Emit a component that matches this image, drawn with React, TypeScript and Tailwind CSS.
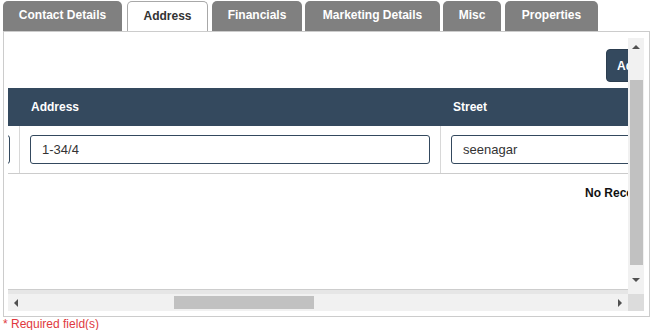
import React from "react"

const tabs = [
  { label: "Contact Details", cls: "w-[119px] ml-[3px]" },
  { label: "Address", cls: "w-[81px] ml-[5px]", active: true },
  { label: "Financials", cls: "w-[90px] ml-[4px]" },
  { label: "Marketing Details", cls: "w-[135px] ml-[3px]" },
  { label: "Misc", cls: "w-[58px] ml-[3px]" },
  { label: "Properties", cls: "w-[93px] ml-[4px]" },
]

const Arrow = ({ dir }: { dir: "up" | "down" | "left" | "right" }) => {
  const pts = {
    up: "0,4 4,0 8,4",
    down: "0,0 8,0 4,4",
    left: "4,0 4,8 0,4",
    right: "0,0 0,8 4,4",
  }[dir]
  const vertical = dir === "up" || dir === "down"
  return (
    <svg width={vertical ? 8 : 4} height={vertical ? 4 : 8} viewBox={vertical ? "0 0 8 4" : "0 0 4 8"}>
      <polygon points={pts} fill="#505050" />
    </svg>
  )
}

export default function App() {
  return (
    <div className="w-[656px] h-[330px] bg-white overflow-hidden font-['Liberation_Sans',Arial,sans-serif]">
      {/* tab strip */}
      <div className="flex items-end h-[31px]">
        {tabs.map((t) =>
          t.active ? (
            <div
              key={t.label}
              className={`${t.cls} h-[30px] flex items-center justify-center bg-white border border-b-0 border-[#a8a8a8] rounded-t-[5px] text-[12px] font-bold text-[#333] pb-[2px]`}
            >
              {t.label}
            </div>
          ) : (
            <div
              key={t.label}
              className={`${t.cls} h-[30px] flex items-center justify-center bg-[#808080] rounded-t-[5px] text-[12px] font-bold text-white pb-[2px]`}
            >
              {t.label}
            </div>
          )
        )}
      </div>

      {/* panel */}
      <div className="ml-[3px] w-[647px] h-[286px] border border-[#cccccc] pt-[6px] pl-[4px]">
        <div className="grid grid-cols-[620px_16px] grid-rows-[256px_17px]">
          {/* scroll content */}
          <div className="overflow-hidden flex flex-col">
            <div className="flex h-[50px] pt-[11px]">
              <div className="ml-[598px] shrink-0 w-[40px] h-[33px] bg-[#34495e] border border-[#2c3e50] rounded-[4px] text-white text-[12px] font-bold flex items-center pl-[10px]">
                Add
              </div>
            </div>
            <div className="flex h-[38px] bg-[#34495e] text-white text-[12px] font-bold items-center w-[800px] shrink-0">
              <div className="w-[12px]" />
              <div className="w-[421px] pl-[11px]">Address</div>
              <div className="pl-[12px]">Street</div>
            </div>
            <div className="flex h-[48px] border-b border-[#cccccc] w-[800px] shrink-0 text-[13px] text-[#333]">
              <div className="w-[12px] border-r border-[#d8d8d8] overflow-hidden flex items-center">
                <div className="w-[40px] ml-[-38px] h-[29px] border border-[#34495e] rounded-[3px] shrink-0" />
              </div>
              <div className="w-[421px] border-r border-[#d8d8d8] flex items-center pl-[10px]">
                <div className="w-[400px] h-[29px] border border-[#34495e] rounded-[3px] flex items-center pl-[11px]">
                  1-34/4
                </div>
              </div>
              <div className="flex items-center pl-[10px]">
                <div className="w-[300px] h-[29px] border border-[#34495e] rounded-[3px] flex items-center pl-[11px]">
                  seenagar
                </div>
              </div>
            </div>
            <div className="flex h-[36px] w-[800px] shrink-0 pt-[10px]">
              <div className="w-[577px]" />
              <div className="text-[12px] font-bold text-[#111] whitespace-nowrap">No Records</div>
            </div>
            <div className="flex-1" />
            <div className="h-[1px] bg-[#cdcdcd]" />
            <div className="h-[4px] bg-[#e6e6e6]" />
          </div>

          {/* vertical scrollbar */}
          <div className="bg-[#f1f1f1] flex flex-col items-center">
            <div className="h-[17px] flex items-center justify-center">
              <Arrow dir="up" />
            </div>
            <div className="h-[25px]" />
            <div className="w-[13px] h-[185px] bg-[#c1c1c1] ml-[1px]" />
            <div className="flex-1 flex items-center justify-center">
              <Arrow dir="down" />
            </div>
          </div>

          {/* horizontal scrollbar */}
          <div className="bg-[#f1f1f1] flex items-center">
            <div className="w-[16px] flex justify-center">
              <Arrow dir="left" />
            </div>
            <div className="w-[150px]" />
            <div className="w-[140px] h-[13px] bg-[#c1c1c1]" />
            <div className="flex-1" />
            <div className="w-[16px] flex justify-center">
              <Arrow dir="right" />
            </div>
          </div>
          <div className="bg-[#dcdcdc]" />
        </div>
      </div>

      <div className="pl-[3px] text-[12px] leading-[14px] text-[#e0393e]">* Required field(s)</div>
    </div>
  )
}
